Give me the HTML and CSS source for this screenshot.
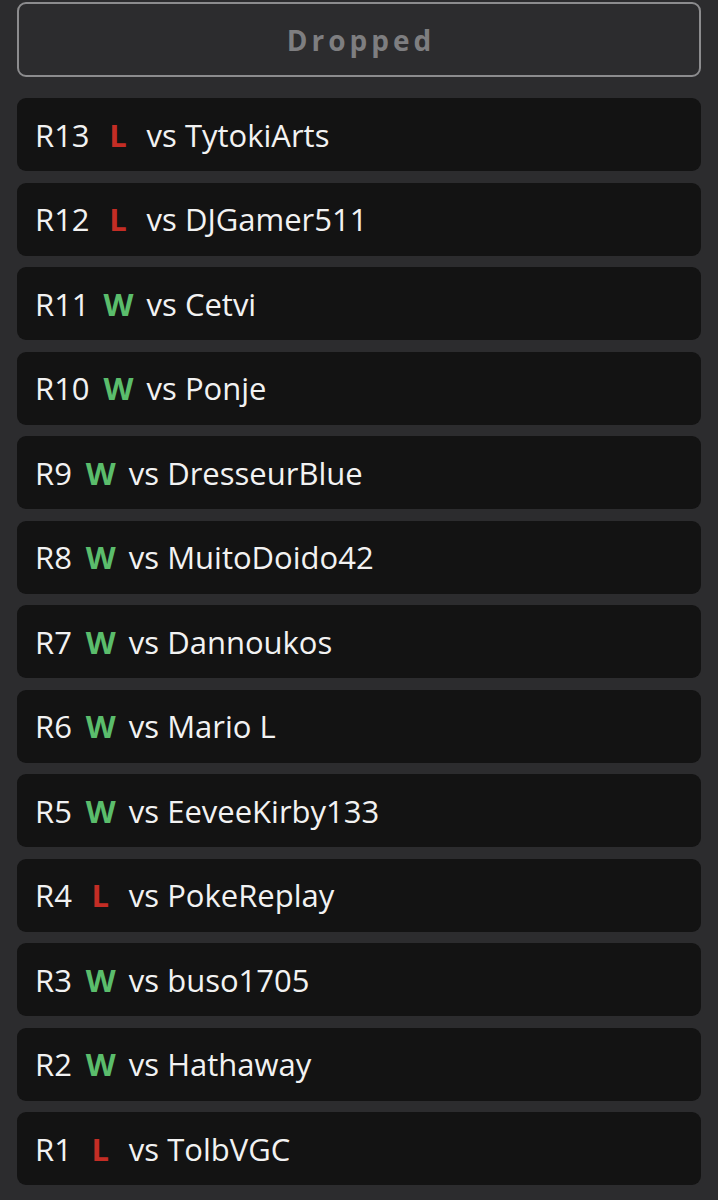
FILE: index.html
```html
<!DOCTYPE html>
<html lang="en">

<head>
    <meta charset="UTF-8">
    <meta name="viewport" content="width=device-width, initial-scale=1.0">
    <title>Match History</title>
    <link rel="stylesheet" href="styles.css">
</head>

<body>
    <main class="history">
        <button class="status-btn" type="button">Dropped</button>

        <ul class="rounds">
            <li class="round"><span class="round-no">R13</span><span class="result loss">L</span><span class="opponent">vs TytokiArts</span></li>
            <li class="round"><span class="round-no">R12</span><span class="result loss">L</span><span class="opponent">vs DJGamer511</span></li>
            <li class="round"><span class="round-no">R11</span><span class="result win">W</span><span class="opponent">vs Cetvi</span></li>
            <li class="round"><span class="round-no">R10</span><span class="result win">W</span><span class="opponent">vs Ponje</span></li>
            <li class="round"><span class="round-no">R9</span><span class="result win">W</span><span class="opponent">vs DresseurBlue</span></li>
            <li class="round"><span class="round-no">R8</span><span class="result win">W</span><span class="opponent">vs MuitoDoido42</span></li>
            <li class="round"><span class="round-no">R7</span><span class="result win">W</span><span class="opponent">vs Dannoukos</span></li>
            <li class="round"><span class="round-no">R6</span><span class="result win">W</span><span class="opponent">vs Mario L</span></li>
            <li class="round"><span class="round-no">R5</span><span class="result win">W</span><span class="opponent">vs EeveeKirby133</span></li>
            <li class="round"><span class="round-no">R4</span><span class="result loss">L</span><span class="opponent">vs PokeReplay</span></li>
            <li class="round"><span class="round-no">R3</span><span class="result win">W</span><span class="opponent">vs buso1705</span></li>
            <li class="round"><span class="round-no">R2</span><span class="result win">W</span><span class="opponent">vs Hathaway</span></li>
            <li class="round"><span class="round-no">R1</span><span class="result loss">L</span><span class="opponent">vs TolbVGC</span></li>
        </ul>
    </main>
</body>

</html>
```

FILE: styles.css
```css
* {
    box-sizing: border-box;
}

body {
    margin: 0;
    padding: 0;
    background: #2c2c2e;
    font-family: 'Open Sans', 'Noto Sans', sans-serif;
    color: #f2f2f2;
    overflow: hidden;
}

/* Page column */
.history {
    padding: 2px 17px 0 17px;
}

/* Outlined status button */
.status-btn {
    display: block;
    width: 100%;
    height: 75px;
    margin: 0;
    background: transparent;
    border: 2px solid #8c8c8e;
    border-radius: 9px;
    color: #7e7e80;
    font-family: 'Open Sans', sans-serif;
    font-weight: 700;
    font-size: 28px;
    letter-spacing: 4px;
    text-indent: 4px;
    text-align: center;
    cursor: pointer;
}

/* Round list */
.rounds {
    list-style: none;
    margin: 21px 0 0 0;
    padding: 0;
    display: flex;
    flex-direction: column;
    gap: 11.5px;
}

.round {
    display: flex;
    align-items: center;
    gap: 14px;
    height: 73px;
    padding: 0 18px;
    background: #131313;
    border-radius: 9px;
    font-size: 31px;
    line-height: 42px;
}

.result {
    width: 29px;
    text-align: center;
    font-weight: 700;
}

.result.win {
    color: #5bbd6c;
}

.result.loss {
    color: #c42d25;
}
```
